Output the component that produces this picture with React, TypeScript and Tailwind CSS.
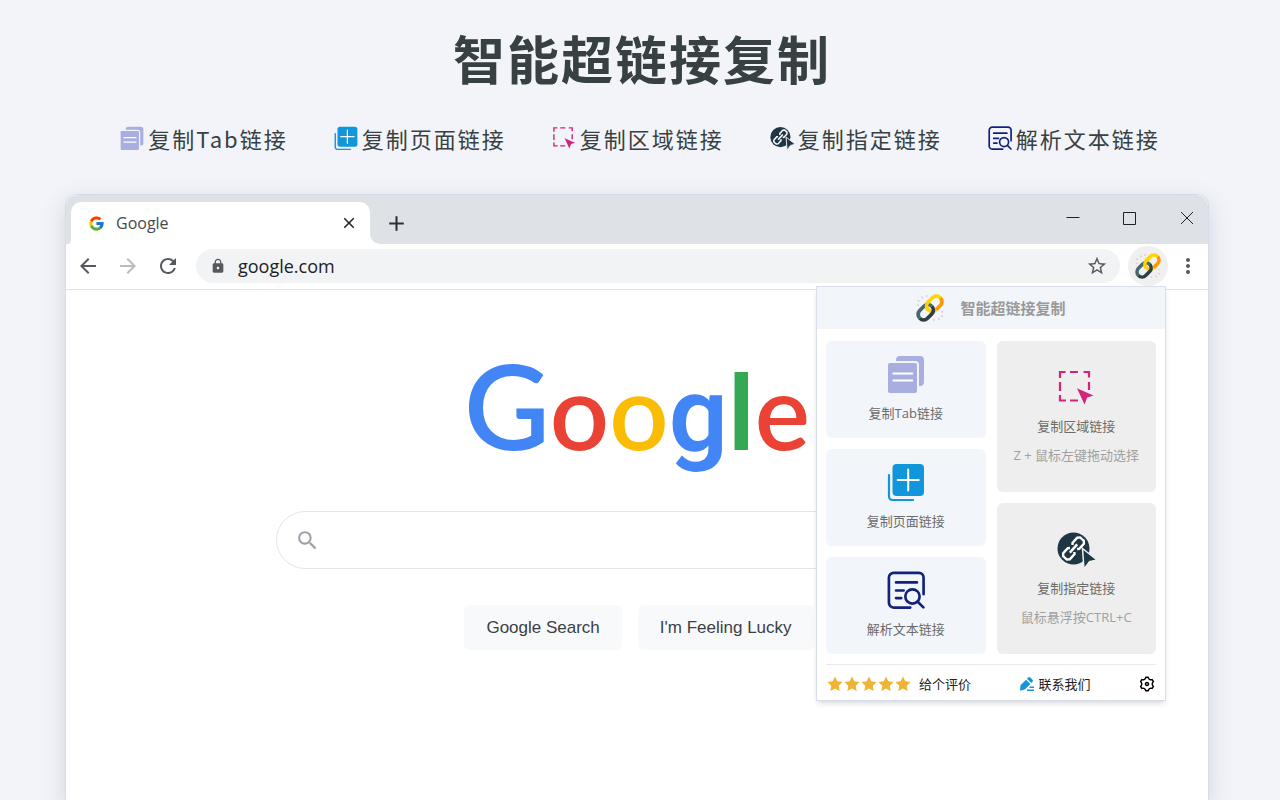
import React from 'react';
import { FcGoogle } from 'react-icons/fc';
import {
  MdAdd,
  MdArrowBack,
  MdArrowForward,
  MdClose,
  MdLock,
  MdMoreVert,
  MdRefresh,
  MdSearch,
  MdStarBorder,
} from 'react-icons/md';
import { RiSettings3Line } from 'react-icons/ri';

type IconProps = { className?: string };

function TabsIcon({ className }: IconProps) {
  return (
    <svg viewBox="0 0 38 38" className={className} aria-hidden="true">
      <path fill="#a9aee1" d="M9 6V5a4 4 0 0 1 4-4h20a4 4 0 0 1 4 4v22a4 4 0 0 1-4 4h-1V10a4 4 0 0 0-4-4z" />
      <rect x="1" y="8" width="29" height="30" rx="2" fill="#a9aee1" />
      <path stroke="#fff" strokeWidth="2" d="M5.500 18.500h20.500M5.500 25.500h20.500" />
    </svg>
  );
}

function PageIcon({ className }: IconProps) {
  return (
    <svg viewBox="0 0 38 38" className={className} aria-hidden="true">
      <rect x="5.500" y="1" width="31.500" height="32" rx="4" fill="#1296db" />
      <path fill="none" stroke="#1296db" strokeWidth="2.200" strokeLinecap="round" d="M2 12v21.500A3.500 3.500 0 0 0 5.500 37H26" />
      <path stroke="#fff" strokeWidth="2" strokeLinecap="round" d="M21.200 6.500v21M10.700 17h21" />
    </svg>
  );
}

function AreaIcon({ className }: IconProps) {
  return (
    <svg viewBox="0 0 38 38" className={className} aria-hidden="true">
      <path
        fill="none"
        stroke="#d4237a"
        strokeWidth="2.200"
        d="M3 9V3h5.500M13 3h8M26.500 3H32v5.500M32 13v8M3 13v9M3 26v5.500h6M13 31.500h8"
      />
      <path fill="#d4237a" d="M20 19.200 36.500 26.500l-6.300 2L27.500 35.500z" />
    </svg>
  );
}

function PointIcon({ className }: IconProps) {
  return (
    <svg viewBox="0 0 38 38" className={className} aria-hidden="true" overflow="visible">
      <circle cx="16.500" cy="17.500" r="16" fill="#1f3644" />
      <g fill="none" stroke="#fff" strokeWidth="2.400" transform="rotate(-48 16.500 17.500)">
        <path d="M14.500 14.500l-1.500-1.500H6l-2.200 2v5L6 22h7l1.500-1.500" />
        <path d="M18.500 14.500 20 13h7l2.200 2v5L27 22h-7l-1.500-1.500" />
        <path d="M11 17.500h11" />
      </g>
      <path fill="#1f3644" stroke="#f0f0f2" strokeWidth="1.500" d="M25.500 17.500 40 29l-7.500 1.700-5.500 7.500z" />
    </svg>
  );
}

function ParseIcon({ className }: IconProps) {
  return (
    <svg viewBox="0 0 40 40" className={className} aria-hidden="true">
      <g fill="none" stroke="#13227a" strokeWidth="2.800" strokeLinecap="round">
        <path d="M24.500 38.500H7A5 5 0 0 1 2 33.500V7a5 5 0 0 1 5-5h26.500a5 5 0 0 1 5 5v17.500" />
        <path d="M9.500 12h22M9.500 20.500h8M9.500 28.500h5.500" />
        <circle cx="26.800" cy="26.800" r="7.500" />
        <path d="m32.300 32.300 6 6" />
      </g>
    </svg>
  );
}

function ChainLogo({ className }: IconProps) {
  return (
    <svg viewBox="0 0 28 28" className={className} aria-hidden="true">
      <path
        stroke="#d9cdd0"
        strokeWidth="1.300"
        d="M5.500 2.500 7 4.500M10.500 1l.5 2M1.500 6l2 1.500M1 11l2 .5M22 24l1.500 2M17.500 25l.5 2M25 21.500l2 1.500M25 17.500l2 .5"
      />
      <g fill="none" strokeWidth="3.800" transform="rotate(-45 14 14)">
        <path stroke="#ff9800" d="M17 19.500h6a5.500 5.500 0 0 0 5.500-5.500" />
        <path stroke="#ffd500" d="M17 19.500a5.500 5.500 0 0 1 0-11h6a5.500 5.500 0 0 1 5.500 5.500" />
        <path stroke="#4a6670" d="M-.5 14a5.500 5.500 0 0 1 5.500-5.500h6a5.500 5.500 0 0 1 5.500 5.500" />
        <path stroke="#2d3e44" d="M-.5 14a5.500 5.500 0 0 0 5.500 5.500h6a5.500 5.500 0 0 0 5.500-5.500" />
        <path stroke="#ffd500" d="M11.500 14a5.500 5.500 0 0 1 5.500-5.500h2" />
      </g>
    </svg>
  );
}

function Star({ className }: IconProps) {
  return (
    <svg viewBox="0 0 16 16" className={className} aria-hidden="true">
      <path fill="#efb336" d="m8 .5 2.300 4.800 5.300.7-3.900 3.700 1 5.300L8 12.500 3.300 15l1-5.300L.4 6l5.300-.7z" />
    </svg>
  );
}

function PenIcon({ className }: IconProps) {
  return (
    <svg viewBox="0 0 16 16" className={className} aria-hidden="true">
      <path fill="#1296db" d="M1.500 9.200 7 3.700l4.300 4.300-5.500 5.500-4.800 1.300zM8 2.700l1.200-1.200a1.500 1.500 0 0 1 2.100 0l2.200 2.200a1.500 1.500 0 0 1 0 2.100L12.300 7z" />
      <path stroke="#1296db" strokeWidth="1.500" d="M10.500 11.300H15M8 14.200h7" />
    </svg>
  );
}

const features = [
  { label: '复制Tab链接', icon: TabsIcon },
  { label: '复制页面链接', icon: PageIcon },
  { label: '复制区域链接', icon: AreaIcon },
  { label: '复制指定链接', icon: PointIcon },
  { label: '解析文本链接', icon: ParseIcon },
];

const actions = [features[0], features[1], features[4]];

const shortcuts = [
  { ...features[2], hint: 'Z + 鼠标左键拖动选择' },
  { ...features[3], hint: '鼠标悬浮按CTRL+C' },
];

function TabStrip() {
  return (
    <div className="flex h-[49px] bg-white">
      <div className="w-[5px] rounded-br bg-[#dee1e6]" />
      <div className="w-[299px] bg-[#dee1e6] pt-[7px]">
        <div className="flex h-full items-center rounded-t-[10px] bg-white pr-3 pl-[17px]">
          <FcGoogle size={17} />
          <span className="ml-[11px] flex-1 text-base text-[#45494d]">Google</span>
          <button aria-label="Close tab" className="text-[#202124]">
            <MdClose size={18} />
          </button>
        </div>
      </div>
      <div className="flex flex-1 items-center justify-between rounded-bl-[10px] bg-[#dee1e6] pr-[14px] pl-[14px]">
        <button aria-label="New tab" className="pt-[7px] text-[#2d3034]">
          <MdAdd size={25} />
        </button>
        <div className="flex gap-[43px] pb-1 text-[#202124]">
          <button aria-label="Minimize">
            <svg viewBox="0 0 14 14" className="size-[14px]" fill="none" stroke="currentColor">
              <path d="M.5 6.500h13" />
            </svg>
          </button>
          <button aria-label="Maximize">
            <svg viewBox="0 0 14 14" className="size-[14px]" fill="none" stroke="currentColor">
              <path d="M.5 1.500h12v12H.5z" />
            </svg>
          </button>
          <button aria-label="Close">
            <svg viewBox="0 0 14 14" className="size-[14px]" fill="none" stroke="currentColor">
              <path d="m1 1 12 12M13 1 1 13" />
            </svg>
          </button>
        </div>
      </div>
    </div>
  );
}

function Toolbar() {
  return (
    <div className="flex h-[46px] items-center border-b border-[#dee1e6] pr-2 pb-px pl-[10px] text-[#55595e]">
      <div className="flex gap-4">
        <button aria-label="Back">
          <MdArrowBack size={24} />
        </button>
        <button aria-label="Forward" className="text-[#babcbe]">
          <MdArrowForward size={24} />
        </button>
        <button aria-label="Reload">
          <MdRefresh size={24} />
        </button>
      </div>
      <div className="ml-4 flex h-[34px] min-w-0 flex-1 items-center rounded-full bg-[#f1f3f4] pr-3 pl-[14px]">
        <MdLock size={16} />
        <input
          aria-label="Address"
          defaultValue="google.com"
          className="ml-3 min-w-0 flex-1 bg-transparent text-lg text-[#202124] outline-none"
        />
        <button aria-label="Bookmark this page">
          <MdStarBorder size={22} />
        </button>
      </div>
      <button aria-label="智能超链接复制" className="ml-2 flex size-10 items-center justify-center rounded-full bg-[#f0f0f0]">
        <ChainLogo className="size-[26px]" />
      </button>
      <button aria-label="Menu" className="ml-2">
        <MdMoreVert size={24} />
      </button>
    </div>
  );
}

function SearchPage() {
  return (
    <div className="flex flex-col items-center pt-[45px]">
      <div aria-label="Google" className="flex h-[140px] items-baseline font-[Lato] text-[104px] leading-[140px] font-semibold">
        <span className="text-[118px] text-[#4285f4]">G</span>
        <span className="text-[#ea4335]">o</span>
        <span className="text-[#fbbc05]">o</span>
        <span className="font-[Roboto] text-[#4285f4]">g</span>
        <span className="font-[Roboto] text-[#34a853]">l</span>
        <span className="text-[#ea4335]">e</span>
      </div>
      <label className="mt-9 flex h-[58px] w-full max-w-[722px] items-center rounded-full border border-[#e3e5e8] pl-[18px]">
        <MdSearch size={25} className="text-[#9aa0a6]" />
        <input type="text" aria-label="Search" className="ml-3 flex-1 bg-transparent outline-none" />
      </label>
      <div className="mt-9 flex gap-4 pl-1 font-['Liberation_Sans',sans-serif] text-[17px] text-[#3c4043]">
        <button className="h-[45px] rounded-md bg-[#f8f9fb] px-[22px]">Google Search</button>
        <button className="h-[45px] rounded-md bg-[#f8f9fb] px-[22px]">I'm Feeling Lucky</button>
      </div>
    </div>
  );
}

function Popup() {
  return (
    <div className="absolute top-[91px] right-[42px] w-[350px] border border-[#d8deea] bg-white text-[13px] leading-5 shadow-md">
      <div className="flex h-[42px] items-center justify-center gap-4 bg-[#f2f5fa]">
        <ChainLogo className="size-7" />
        <h2 className="text-[15px] font-bold text-[#999]">智能超链接复制</h2>
      </div>
      <div className="grid grid-cols-2 gap-[11px] px-[9px] pt-3">
        <div className="flex flex-col gap-[11px]">
          {actions.map(({ label, icon: Icon }) => (
            <button key={label} className="flex h-[97px] flex-col items-center rounded-md bg-[#f2f5fa] pt-[14px] text-[#6b6b6b]">
              <Icon className="size-[38px]" />
              <span className="mt-[10px]">{label}</span>
            </button>
          ))}
        </div>
        <div className="flex flex-col gap-[11px]">
          {shortcuts.map(({ label, hint, icon: Icon }) => (
            <button key={label} className="flex flex-1 flex-col items-center rounded-md bg-[#eee] pt-7 text-[#6b6b6b]">
              <Icon className="size-[38px]" />
              <span className="mt-[9px]">{label}</span>
              <span className="mt-[9px] text-[#a0a0a0]">{hint}</span>
            </button>
          ))}
        </div>
      </div>
      <div className="mx-[9px] mt-[10px] flex h-9 items-center justify-between border-t border-[#e8eaee] pt-[3px] text-[#222]">
        <a href="#rate" className="flex items-center gap-2">
          <span className="flex gap-px pl-px">
            {[1, 2, 3, 4, 5].map((n) => (
              <Star key={n} className="size-4" />
            ))}
          </span>
          给个评价
        </a>
        <a href="#contact" className="flex items-center gap-1">
          <PenIcon className="size-4" />
          联系我们
        </a>
        <button aria-label="设置" className="text-black">
          <RiSettings3Line size={18} />
        </button>
      </div>
    </div>
  );
}

export default function App() {
  return (
    <div className="flex h-screen flex-col overflow-hidden bg-[#f2f4f9] font-['Open_Sans','Noto_Sans_CJK_SC',sans-serif]">
      <h1 className="pt-[22px] pl-1 text-center text-[52px] leading-[76px] font-bold tracking-[2px] text-[#384142]">智能超链接复制</h1>
      <ul className="mt-6 flex h-8 justify-center gap-[46px] font-['Noto_Sans_CJK_SC',sans-serif] text-[22px] tracking-[2px] text-[#384142]">
        {features.map(({ label, icon: Icon }) => (
          <li key={label} className="flex items-center gap-1 whitespace-nowrap">
            <Icon className="size-6" />
            {label}
          </li>
        ))}
      </ul>
      <main className="relative mt-10 mr-[71px] ml-[65px] flex-1 rounded-t-xl border border-b-0 border-[#d5dcea] bg-white shadow-[0_8px_24px_rgba(60,70,100,0.18)]">
        <div className="overflow-hidden rounded-t-xl">
          <TabStrip />
        </div>
        <Toolbar />
        <SearchPage />
        <Popup />
      </main>
    </div>
  );
}
